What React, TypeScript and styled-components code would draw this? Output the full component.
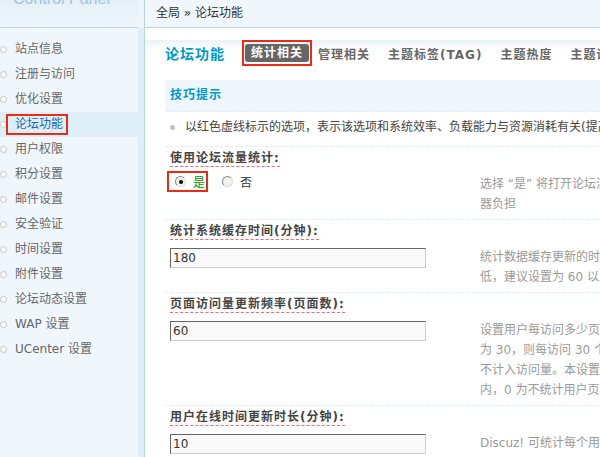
import styled, { createGlobalStyle } from "styled-components";

const GlobalStyle = createGlobalStyle`
  html, body {
    margin: 0;
    padding: 0;
    overflow: hidden;
    background: #fff;
  }
  body {
    font: 12px "DejaVu Sans", "Noto Sans CJK SC", sans-serif;
    color: #333;
  }
`;

const navItems = [
  "站点信息",
  "注册与访问",
  "优化设置",
  "论坛功能",
  "用户权限",
  "积分设置",
  "邮件设置",
  "安全验证",
  "时间设置",
  "附件设置",
  "论坛动态设置",
  "WAP 设置",
  "UCenter 设置",
];

const tabs = ["统计相关", "管理相关", "主题标签(TAG)", "主题热度", "主题评价", "用户组"];

type Setting = {
  label: string;
  value?: string;
  desc: string[];
};

const settings: Setting[] = [
  {
    label: "使用论坛流量统计:",
    desc: [
      "选择 “是” 将打开论坛流量统计功能，提供详细的会员访问统计信息，此功能会轻微加重服务",
      "器负担",
    ],
  },
  {
    label: "统计系统缓存时间(分钟):",
    value: "180",
    desc: [
      "统计数据缓存更新的时间，数值越大，数据更新频率越低，越节约资源，但数据实时程度越",
      "低，建议设置为 60 以上，以免占用过多的服务器资源",
    ],
  },
  {
    label: "页面访问量更新频率(页面数):",
    value: "60",
    desc: [
      "设置用户每访问多少页面才更新一次访问量，0 为每次都更新。例如设置",
      "为 30，则每访问 30 个页面更新一次访问量，其余页面的访问量",
      "不计入访问量。本设置可以降低服务器负担，建议设置在 0～100 之",
      "内，0 为不统计用户页面访问量",
    ],
  },
  {
    label: "用户在线时间更新时长(分钟):",
    value: "10",
    desc: ["Discuz! 可统计每个用户总共和当月的在线时间，本设置用以设定更新用户在线时间的频率"],
  },
];

const App = () => {
  return (
    <>
      <GlobalStyle />
      <S.Frame>
        <S.Sidebar>
          <S.SideHead>
            <S.Logo>Control Panel</S.Logo>
          </S.SideHead>
          <S.Nav>
            {navItems.map((item) => (
              <S.NavItem key={item} $active={item === "论坛功能"}>
                <S.NavText>
                  {item}
                  {item === "论坛功能" && <S.RedFrame $inset="2px -5px 2px -9px" />}
                </S.NavText>
              </S.NavItem>
            ))}
          </S.Nav>
        </S.Sidebar>
        <S.Gutter />
        <S.Main>
          <S.TopBar>全局 » 论坛功能</S.TopBar>
          <S.Content>
            <S.TitleRow>
              <S.Title>论坛功能</S.Title>
              {tabs.map((tab, i) =>
                i === 0 ? (
                  <S.ActiveTab key={tab}>
                    {tab}
                    <S.RedFrame $inset="-4px -3px" />
                  </S.ActiveTab>
                ) : (
                  <S.Tab key={tab}>{tab}</S.Tab>
                )
              )}
            </S.TitleRow>

            <S.Tips>技巧提示</S.Tips>
            <S.Hint>
              <S.HintDot />
              以红色虚线标示的选项，表示该选项和系统效率、负载能力与资源消耗有关(提高性能的同时可能会降低某些功能的使用效果)
            </S.Hint>

            {settings.map((s) => (
              <S.Setting key={s.label}>
                <S.LabelRow>
                  <S.Label>{s.label}</S.Label>
                </S.LabelRow>
                <S.ValueRow>
                  <S.ValueCell>
                    {s.value === undefined ? (
                      <S.RadioGroup>
                        <S.Option $color="#090">
                          <S.Radio $checked />是
                          <S.RedFrame $inset="0 -3px 0 -8px" />
                        </S.Option>
                        <S.Option>
                          <S.Radio />否
                        </S.Option>
                      </S.RadioGroup>
                    ) : (
                      <S.TextInput defaultValue={s.value} />
                    )}
                  </S.ValueCell>
                  <S.Desc>
                    {s.desc.map((line) => (
                      <S.DescLine key={line}>{line}</S.DescLine>
                    ))}
                  </S.Desc>
                </S.ValueRow>
              </S.Setting>
            ))}
          </S.Content>
        </S.Main>
      </S.Frame>
    </>
  );
};

export default App;

const S = {
  Frame: styled.div`
    display: flex;
    width: 600px;
    height: 457px;
    overflow: hidden;
  `,
  Sidebar: styled.aside`
    flex: none;
    width: 138px;
    background: #f0f7fc;
  `,
  SideHead: styled.div`
    height: 27px;
    padding-left: 13px;
    border-bottom: 1px solid #bcd4df;
    background: linear-gradient(#e4f0f8, #eef6fb);
    overflow: hidden;
  `,
  Logo: styled.div`
    margin-top: -9px;
    font: 16px/15px "Liberation Sans", sans-serif;
    color: #a3c5db;
    white-space: nowrap;
  `,
  Nav: styled.ul`
    list-style: none;
    margin: 0;
    padding: 9px 0 0;
  `,
  NavItem: styled.li<{ $active?: boolean }>`
    position: relative;
    height: 25px;
    padding-left: 15px;
    color: ${(p) => (p.$active ? "#2366a8" : "#666")};
    background: ${(p) => (p.$active ? "#deeffa" : "transparent")};
    white-space: nowrap;

    &::before {
      content: "";
      position: absolute;
      left: 0;
      top: 9px;
      width: 5px;
      height: 5px;
      border: 1px solid #c4c4c4;
      border-radius: 50%;
      background: #fff;
    }
  `,
  NavText: styled.span`
    position: relative;
    display: inline-block;
    line-height: 25px;
  `,
  RedFrame: styled.span<{ $inset: string }>`
    position: absolute;
    inset: ${(p) => p.$inset};
    border: 2px solid #ee2a10;
    pointer-events: none;
  `,
  Gutter: styled.div`
    flex: none;
    width: 6px;
    border-right: 1px solid #bcd4df;
    background: linear-gradient(#eef6fb 28px, #ddeef8 28px);
  `,
  Main: styled.main`
    flex: 1;
    min-width: 0;
    overflow: hidden;
  `,
  TopBar: styled.div`
    height: 27px;
    padding-left: 11px;
    line-height: 27px;
    border-bottom: 1px solid #bcd4df;
    background: #f0f7fc;
    color: #333;
    white-space: nowrap;
  `,
  Content: styled.div`
    padding-left: 20px;
    background: linear-gradient(#eaf3f9, #fff 10px) no-repeat;
  `,
  TitleRow: styled.div`
    display: flex;
    align-items: center;
    height: 26px;
    margin: 12px 0 14px;
    white-space: nowrap;
  `,
  Title: styled.h2`
    margin: 0 20px 0 0;
    font-size: 14px;
    font-weight: bold;
    letter-spacing: 1px;
    color: #0099cc;
  `,
  ActiveTab: styled.span`
    position: relative;
    height: 18px;
    padding: 0 6px;
    line-height: 18px;
    border-radius: 3px;
    background: #666;
    color: #fff;
    font-weight: bold;
    letter-spacing: 1px;
  `,
  Tab: styled.span`
    padding: 0 9px;
    color: #666;
    font-weight: bold;
    letter-spacing: 1px;
  `,
  Tips: styled.div`
    height: 31px;
    padding-left: 5px;
    line-height: 31px;
    border-bottom: 1px dashed #deeffb;
    background: #f0f7fc;
    color: #0099cc;
    font-weight: bold;
    letter-spacing: 1px;
  `,
  Hint: styled.div`
    display: flex;
    align-items: center;
    gap: 10px;
    padding: 5px 0 9px 5px;
    line-height: 20px;
    color: #444;
    white-space: nowrap;
  `,
  HintDot: styled.span`
    flex: none;
    width: 5px;
    height: 5px;
    border-radius: 50%;
    background: #c2c2c2;
  `,
  Setting: styled.section`
    border-top: 1px dashed #deeffb;
  `,
  LabelRow: styled.div`
    height: 24px;
    padding: 4px 0 0 5px;
    box-sizing: border-box;
  `,
  Label: styled.span`
    display: inline-block;
    line-height: 15px;
    border-bottom: 1px dashed #ff6666;
    color: #444;
    font-weight: bold;
    letter-spacing: 1px;
    white-space: nowrap;
  `,
  ValueRow: styled.div`
    display: flex;
  `,
  ValueCell: styled.div`
    flex: none;
    width: 305px;
    padding: 4px 0 0 5px;
  `,
  RadioGroup: styled.div`
    display: flex;
    gap: 17px;
    margin: -4px 0 0 5px;
  `,
  Option: styled.label<{ $color?: string }>`
    position: relative;
    display: flex;
    align-items: center;
    gap: 7px;
    height: 21px;
    color: ${(p) => p.$color ?? "#333"};
  `,
  Radio: styled.span<{ $checked?: boolean }>`
    position: relative;
    width: 9px;
    height: 9px;
    border: 1px solid;
    border-color: #8a8a8a #dcdcdc #dcdcdc #8a8a8a;
    border-radius: 50%;
    background: #f4f4ee;

    &::after {
      content: "";
      display: ${(p) => (p.$checked ? "block" : "none")};
      position: absolute;
      left: 2.5px;
      top: 2.5px;
      width: 4px;
      height: 4px;
      border-radius: 50%;
      background: #000;
    }
  `,
  TextInput: styled.input`
    width: 256px;
    height: 20px;
    box-sizing: border-box;
    padding: 0 2px;
    border: 1px solid;
    border-color: #666 #ccc #ccc #666;
    background: #f9f9f9;
    font: 12px "DejaVu Sans", "Noto Sans CJK SC", sans-serif;
    color: #333;
    outline: none;
  `,
  Desc: styled.div`
    padding: 3px 0 5px 5px;
    line-height: 20px;
    color: #999;
  `,
  DescLine: styled.div`
    white-space: nowrap;
  `,
};
